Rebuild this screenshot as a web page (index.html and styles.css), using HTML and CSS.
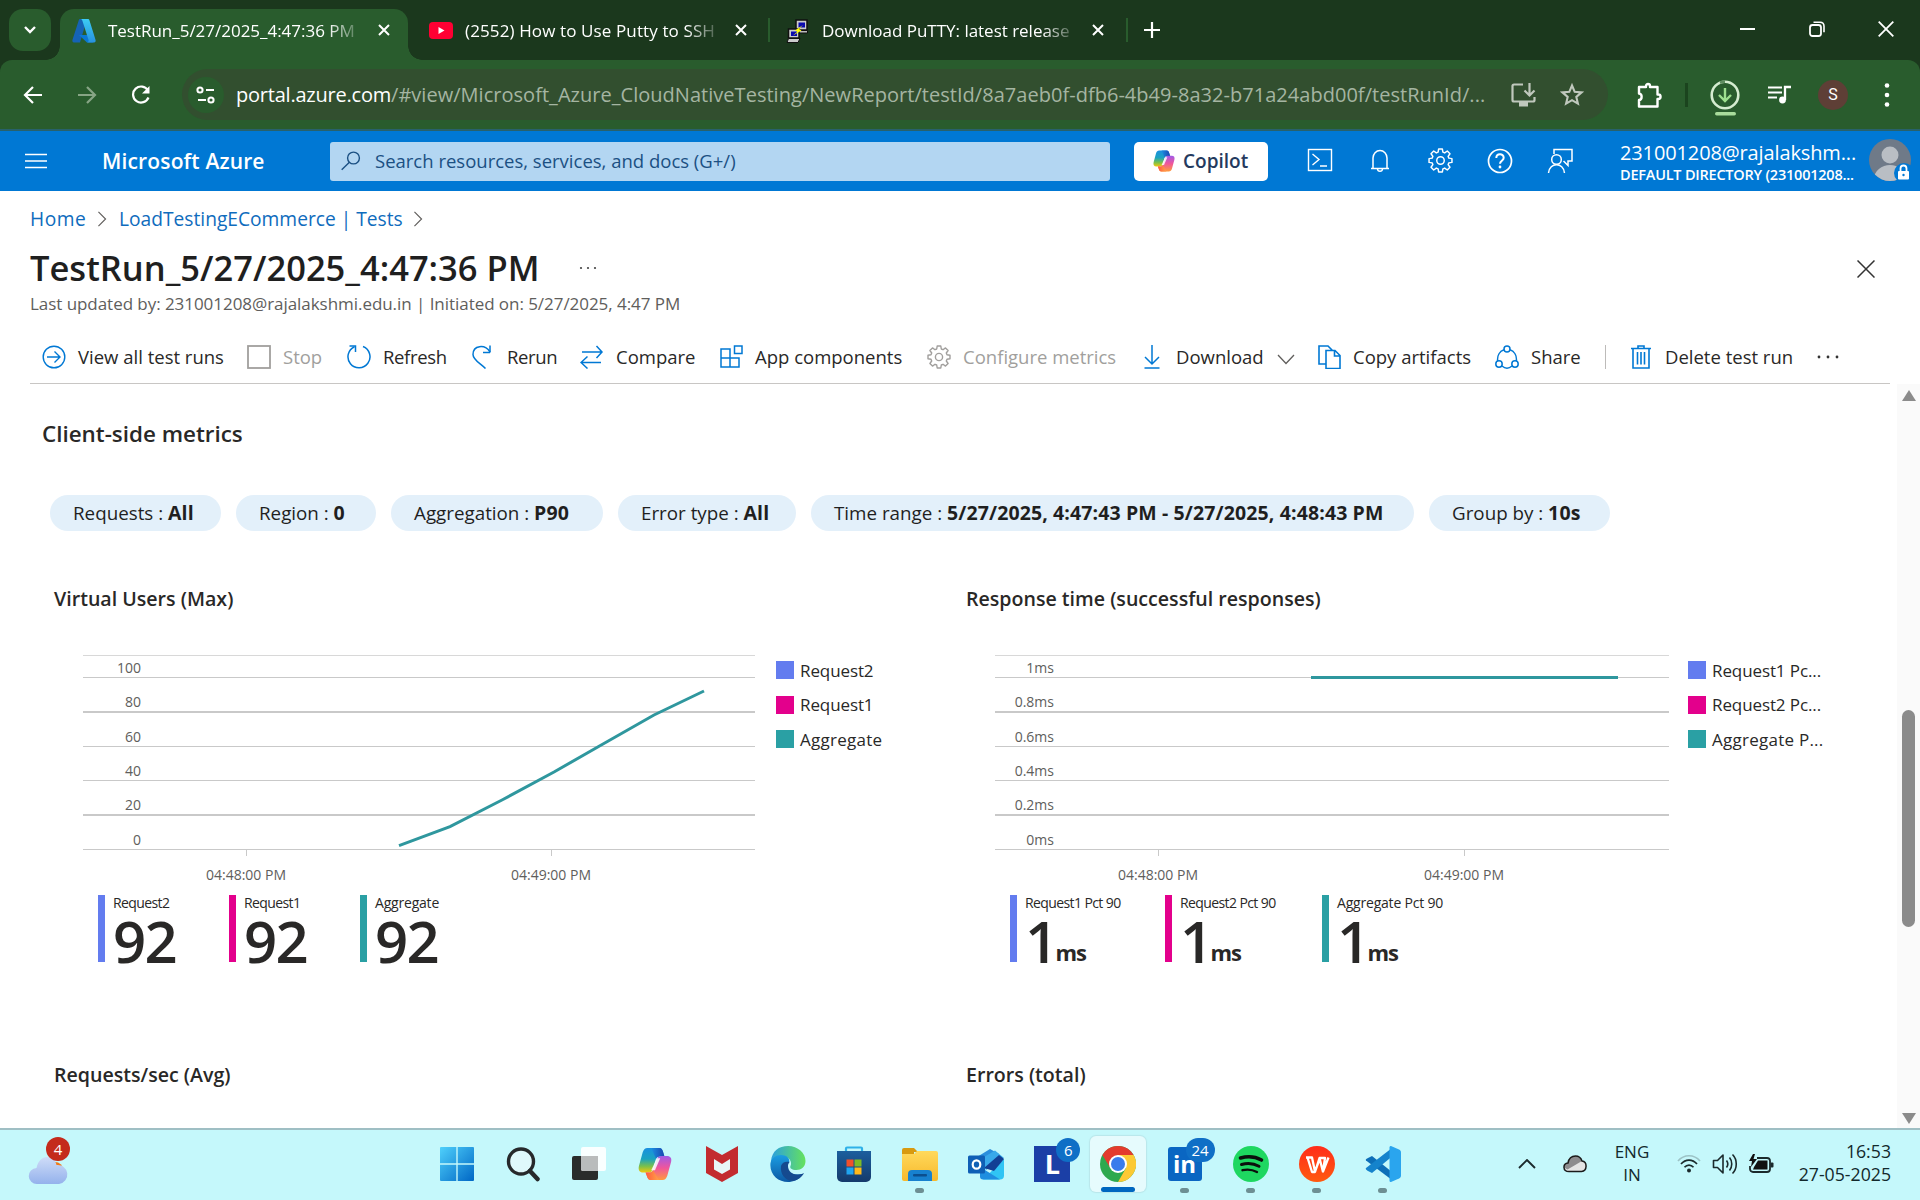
FILE: index.html
```html
<!DOCTYPE html>
<html lang="en">
<head>
<meta charset="utf-8">
<title>TestRun_5/27/2025_4:47:36 PM - Microsoft Azure</title>
<link rel="stylesheet" href="styles.css">
</head>
<body>
<svg class="defs" width="0" height="0" aria-hidden="true">
  <defs>
    <linearGradient id="cpA" x1="0" y1="0" x2="0" y2="1"><stop offset="0" stop-color="#1a8fe0"/><stop offset=".45" stop-color="#1ba3c0"/><stop offset=".75" stop-color="#7cc04a"/><stop offset="1" stop-color="#f3c80c"/></linearGradient>
    <linearGradient id="cpB" x1="0" y1="0" x2="0" y2="1"><stop offset="0" stop-color="#a05ae8"/><stop offset=".5" stop-color="#f0569b"/><stop offset="1" stop-color="#ff9a3c"/></linearGradient>
    <linearGradient id="cpC" x1="0" y1="0" x2="1" y2="0"><stop offset="0" stop-color="#1a8fe0"/><stop offset="1" stop-color="#1b44b0"/></linearGradient>
    <linearGradient id="cpD" x1="0" y1="0" x2="1" y2="0"><stop offset="0" stop-color="#ff5a3c"/><stop offset="1" stop-color="#ffa14a"/></linearGradient>
    <linearGradient id="win" x1="0" y1="0" x2="1" y2="1"><stop offset="0" stop-color="#4fd0fb"/><stop offset="1" stop-color="#0067c5"/></linearGradient>
    <linearGradient id="azR" x1="0" y1="0" x2="0" y2="1"><stop offset="0" stop-color="#3ccbf4"/><stop offset="1" stop-color="#2892df"/></linearGradient>
    <linearGradient id="edA" x1="0" y1="0" x2="1" y2="0"><stop offset="0" stop-color="#2a9fe0"/><stop offset="1" stop-color="#66e25c"/></linearGradient>
    <linearGradient id="edB" x1="0" y1="0" x2="0" y2="1"><stop offset="0" stop-color="#1b9de2"/><stop offset="1" stop-color="#0c59a4"/></linearGradient>
    <linearGradient id="cloud" x1="0" y1="0" x2="0" y2="1"><stop offset="0" stop-color="#cfdcf8"/><stop offset="1" stop-color="#94b2ec"/></linearGradient>
    <linearGradient id="folder" x1="0" y1="0" x2="0" y2="1"><stop offset="0" stop-color="#ffd95c"/><stop offset="1" stop-color="#f7b92c"/></linearGradient>
    <linearGradient id="store" x1="0" y1="0" x2="0" y2="1"><stop offset="0" stop-color="#1c5f9e"/><stop offset="1" stop-color="#143a6b"/></linearGradient>
    <linearGradient id="wps" x1="0" y1="0" x2="0" y2="1"><stop offset="0" stop-color="#ff2d1a"/><stop offset="1" stop-color="#ff5a10"/></linearGradient>
    <symbol id="copilot" viewBox="0 0 36 36">
      <path d="M10 1h12.500c2.400 0 3.300 1.600 4 4l1.500 5h-5c-2.500 0-3.500 1-4.300 3.500L16 23c-1 3-2.300 4-5 4H5.500C1.500 27 0 24 1 20L5 5.500C6 2.500 7.500 1 10 1z" fill="url(#cpA)"/>
      <path d="M14 1h8.500c2.400 0 3.300 1.600 4 4l1.500 5h-5c-2 0-3 .8-3.900 2.500z" fill="url(#cpC)"/>
      <path d="M26 35H13.500c-2.400 0-3.300-1.600-4-4L8 27h4c2.500 0 3.500-1 4.300-3.500L20 13c1-2.500 2.300-3.500 5-3.500h5.500C34.500 9.500 36 12 35 16l-4 14.500c-1 3-2.500 4.500-5 4.500z" fill="url(#cpB)"/>
      <path d="M22 35h-8.500c-2.400 0-3.300-1.600-4-4L8 27h4c2 0 3-.8 3.900-2.500z" fill="url(#cpD)"/>
      <path d="M20 12h3.500L18 24.500h-4z" fill="#fff" fill-opacity=".85"/>
    </symbol>
    <symbol id="gear" viewBox="0 0 24 24"><g fill="none" stroke="currentColor" stroke-width="1.400" stroke-linejoin="round"><path d="M10.200 1h3.600l.5 3 1.700.7 2.500-1.800 2.600 2.600-1.800 2.500.7 1.700 3 .5v3.600l-3 .5-.7 1.700 1.800 2.500-2.600 2.600-2.500-1.800-1.700.7-.5 3h-3.600l-.5-3-1.700-.7-2.500 1.800-2.600-2.600 1.800-2.500-.7-1.700-3-.5v-3.600l3-.5.7-1.700-1.800-2.500 2.600-2.600 2.500 1.800 1.700-.7z"/><circle cx="12" cy="12" r="3.600"/></g></symbol>
    <symbol id="x" viewBox="0 0 12 12"><path d="M1 1l10 10M11 1L1 11" fill="none" stroke="currentColor" stroke-width="2"/></symbol>
    <symbol id="chev" viewBox="0 0 10 18"><path d="M1 1l8 8-8 8" fill="none" stroke="#605e5c" stroke-width="1.300"/></symbol>
  </defs>
</svg>

<div class="screen">
  <div class="tabstrip">
    <div class="tabsearch"><svg width="12" height="8" viewBox="0 0 12 8"><path d="M1 1l5 5 5-5" fill="none" stroke="#fff" stroke-width="2.400"/></svg></div>
    <div class="tab active">
      <svg class="fav" width="24" height="24" viewBox="0 0 24 24"><path d="M8 0h7L8 23.500H2C.5 23.500 0 22 .5 20.800L6.700 1.500C7 .5 7.300 0 8 0z" fill="#1563b5"/><path d="M7 16h11l3 7.500h-6z" fill="#0a78d4"/><path d="M8.500 0H16c.8 0 1.200.5 1.500 1.500l6 19.300c.5 1.500-.2 2.700-1.500 2.700h-7c1.500-.3 1.800-1.500 1.500-2.700L10.300 1.500C10 .6 9.500 0 8.500 0z" fill="url(#azR)"/></svg>
      <span class="tab-title">TestRun_5/27/2025_4:47:36 PM</span>
      <svg class="tab-x" width="12" height="12"><use href="#x"/></svg>
    </div>
    <div class="tab second">
      <svg class="fav" width="24" height="18" viewBox="0 0 24 18"><rect width="24" height="17" rx="4" fill="#ff0033"/><path d="M9.500 5v7l6-3.500z" fill="#fff"/></svg>
      <span class="tab-title">(2552) How to Use Putty to SSH</span>
      <svg class="tab-x" width="12" height="12"><use href="#x"/></svg>
    </div>
    <div class="tab third">
      <svg class="fav" width="24" height="24" viewBox="0 0 24 24"><rect x="10" y="1" width="11" height="10" fill="#ccc" stroke="#111" stroke-width="1.500"/><rect x="12.500" y="3.500" width="6.500" height="5" fill="#0a0ab0"/><path d="M9 11.500h12.500v2.500H12z" fill="#bbb" stroke="#111"/><rect x="2.500" y="10" width="10.500" height="9" fill="#ccc" stroke="#111" stroke-width="1.500"/><rect x="5" y="12.500" width="6" height="4.500" fill="#0a0ab0"/><path d="M2.500 19.500h11.500l-2 4H1z" fill="#ccc" stroke="#111"/><path d="M17 6l-8 5.500 2.500 1-4.500 4 8.500-5-2.500-1.500z" fill="#ff0"/></svg>
      <span class="tab-title">Download PuTTY: latest release</span>
      <svg class="tab-x" width="12" height="12"><use href="#x"/></svg>
    </div>
    <svg class="newtab" width="16" height="16" viewBox="0 0 16 16"><path d="M8 0v16M0 8h16" stroke="#fff" stroke-width="2.200"/></svg>
    <div class="winctl">
      <svg width="16" height="18" viewBox="0 0 16 18"><path d="M0 9h15" stroke="#fff" stroke-width="2"/></svg>
      <svg width="16" height="16" viewBox="0 0 16 16"><rect x="1" y="4" width="11" height="11" rx="2.500" fill="none" stroke="#fff" stroke-width="1.800"/><path d="M4.500 1.200h6.500c2.500 0 4 1.500 4 4v6" fill="none" stroke="#fff" stroke-width="1.600"/></svg>
      <svg width="16" height="16" viewBox="0 0 16 16"><path d="M.7.7l14.600 14.600M15.300.7L.7 15.300" stroke="#fff" stroke-width="1.800"/></svg>
    </div>
  </div>

  <div class="navbar">
    <svg class="nav-back" width="20" height="18" viewBox="0 0 20 18"><path d="M19 9H2M10 1L2 9l8 8" fill="none" stroke="#fff" stroke-width="2.200"/></svg>
    <svg class="nav-fwd" width="20" height="18" viewBox="0 0 20 18"><path d="M1 9h17M10 1l8 8-8 8" fill="none" stroke="#87a585" stroke-width="2.200"/></svg>
    <svg class="nav-reload" width="20" height="20" viewBox="0 0 20 20"><path d="M17.500 12.500A8 8 0 1 1 17 5.500" fill="none" stroke="#fff" stroke-width="2.200"/><path d="M18.500 1v7.500H11z" fill="#fff"/></svg>
    <div class="omnibox">
      <div class="siteinfo"><svg width="20" height="18" viewBox="0 0 20 18"><g fill="none" stroke="#fff" stroke-width="2"><circle cx="4" cy="4" r="2.600"/><path d="M10 4h8M2 14h8"/><circle cx="15" cy="14" r="2.600"/></g></svg></div>
      <div class="url"><span class="host">portal.azure.com</span><span class="path">/#view/Microsoft_Azure_CloudNativeTesting/NewReport/testId/8a7aeb0f-dfb6-4b49-8a32-b71a24abd00f/testRunId/...</span></div>
      <svg class="install" width="25" height="26" viewBox="0 0 25 26"><g fill="none" stroke="#c0c8bd" stroke-width="2.200"><path d="M12 2.500H3a1.500 1.500 0 0 0-1.500 1.500v14A1.500 1.500 0 0 0 3 19.500h19a1.500 1.500 0 0 0 1.500-1.500v-3"/><path d="M18.500 1v12M13.500 8.500l5 5 5-5"/></g><rect x="8" y="20" width="9" height="4.500" fill="#c0c8bd"/></svg>
      <svg width="24" height="25" viewBox="0 0 24 23"><path d="M12 2.500l2.700 6.300 6.800.6-5.200 4.500 1.600 6.700-5.900-3.500-5.900 3.500 1.600-6.700-5.200-4.500 6.800-.6z" fill="none" stroke="#c0c8bd" stroke-width="2.100"/></svg>
    </div>
    <svg class="puzzle" width="26" height="26" viewBox="0 0 26 26"><path d="M3 5h7V4a2 2 0 0 1 4 0v1h7.500v7.500h.8a2.200 2.200 0 0 1 0 4.500h-.8v7.500H3v-6.500c3.500 0 3.500-6.500 0-6.500z" fill="none" stroke="#fff" stroke-width="2.400" stroke-linejoin="round"/></svg>
    <i class="nav-sep"></i>
    <svg class="dl" width="30" height="36" viewBox="0 0 30 36"><circle cx="15" cy="15" r="13.300" fill="none" stroke="#d5ecd0" stroke-width="2.600"/><path d="M15 1.700A13.300 13.300 0 0 0 10 2.700" stroke="#5f8d60" stroke-width="2.700" fill="none"/><path d="M15 8v12M9 15l6 6 6-6" fill="none" stroke="#9ee08f" stroke-width="2.400"/><rect x="5" y="32" width="21" height="3.500" rx="1.700" fill="#a9dc9c"/></svg>
    <svg class="media" width="23" height="20" viewBox="0 0 23 20"><path d="M0 2.500h14M0 7.500h14M0 12.500h9" stroke="#fff" stroke-width="2.200"/><circle cx="14.500" cy="15" r="3.400" fill="#fff"/><path d="M17 15V2h6" fill="none" stroke="#fff" stroke-width="2.300"/></svg>
    <div class="profile">S</div>
    <svg class="kebab" width="6" height="24" viewBox="0 0 6 24"><g fill="#fff"><circle cx="3" cy="2.500" r="2.300"/><circle cx="3" cy="12" r="2.300"/><circle cx="3" cy="21.500" r="2.300"/></g></svg>
  </div>

  <header class="azure">
    <svg class="burger" width="22" height="16" viewBox="0 0 22 16"><path d="M0 1.500h22M0 8h22M0 14.500h22" stroke="#fff" stroke-width="1.500"/></svg>
    <b class="brand">Microsoft Azure</b>
    <div class="search">
      <svg width="20" height="20" viewBox="0 0 20 20"><g fill="none" stroke="#1b5083" stroke-width="1.400"><circle cx="12.500" cy="7" r="5.900"/><path d="M8.400 11.200L.7 18.800"/></g></svg>
      <span>Search resources, services, and docs (G+/)</span>
    </div>
    <div class="copilot-btn"><svg width="24" height="22"><use href="#copilot"/></svg><span>Copilot</span></div>
    <div class="az-icons">
      <svg width="26" height="24" viewBox="0 0 26 24"><g fill="none" stroke="#fff" stroke-width="1.400"><rect x="1.500" y="1.500" width="23" height="21"/><path d="M5.500 6l6.500 5.500L5.500 17M13 18h7"/></g></svg>
      <svg width="24" height="26" viewBox="0 0 24 26"><g fill="none" stroke="#fff" stroke-width="1.500"><path d="M3 20.500h18M5 20.500V10a7 7.500 0 0 1 14 0v10.500"/><path d="M9.500 21c.3 3 4.700 3 5 0"/></g></svg>
      <svg class="white" width="25" height="25"><use href="#gear"/></svg>
      <svg width="26" height="26" viewBox="0 0 26 26"><circle cx="13" cy="13" r="11.500" fill="none" stroke="#fff" stroke-width="1.700"/><path d="M9.300 10c0-5 7.400-4.800 7.400-.3 0 3-3.700 3-3.700 6" fill="none" stroke="#fff" stroke-width="2"/><circle cx="13" cy="19" r="1.400" fill="#fff"/></svg>
      <svg width="26" height="26" viewBox="0 0 26 26"><g fill="none" stroke="#fff" stroke-width="1.500"><path d="M7 6V1.500h18V13h-4v4.500L16.500 13"/><circle cx="9.500" cy="11.500" r="4.800"/><path d="M1.500 25c1-11 15-11 16 0"/></g></svg>
    </div>
    <div class="account"><span class="mail">231001208@rajalakshm...</span><span class="dir">DEFAULT DIRECTORY (231001208...</span></div>
    <svg class="avatar" width="42" height="44" viewBox="0 0 42 44"><defs><clipPath id="av"><circle cx="21" cy="21" r="21"/></clipPath></defs><g clip-path="url(#av)"><rect width="42" height="44" fill="#6f7a88"/><circle cx="21" cy="16" r="8.500" fill="#b9bec4"/><path d="M4 44c0-24 34-24 34 0z" fill="#b9bec4"/></g><circle cx="35" cy="34" r="10" fill="#0078d4"/><rect x="29" y="32" width="11" height="8.500" rx="1" fill="#fff"/><path d="M31.500 32v-2.500a3 3 0 0 1 6 0V32" fill="none" stroke="#fff" stroke-width="1.800"/><circle cx="34.500" cy="36" r="1.200" fill="#0078d4"/></svg>
  </header>

  <main class="blade">
    <div class="crumbs"><a>Home</a><svg width="10" height="16"><use href="#chev"/></svg><a>LoadTestingECommerce | Tests</a><svg width="10" height="16"><use href="#chev"/></svg></div>
    <div class="title"><h1>TestRun_5/27/2025_4:47:36 PM</h1><svg class="dots" width="18" height="4" viewBox="0 0 18 4"><g fill="#444"><circle cx="2" cy="2" r="1.100"/><circle cx="9" cy="2" r="1.100"/><circle cx="16" cy="2" r="1.100"/></g></svg><svg class="close" width="18" height="18" viewBox="0 0 18 18"><path d="M.5.5l17 17M17.500.5l-17 17" stroke="#333" stroke-width="1.500"/></svg></div>
    <p class="subtitle">Last updated by: 231001208@rajalakshmi.edu.in | Initiated on: 5/27/2025, 4:47 PM</p>

    <div class="commands">
      <div><svg width="24" height="24" viewBox="0 0 24 24"><g fill="none" stroke="#0078d4" stroke-width="1.400"><circle cx="12" cy="12" r="10.800"/><path d="M5 12h13M12.500 6.500L18 12l-5.500 5.500"/></g></svg><span>View all test runs</span></div>
      <div class="off"><svg width="24" height="24" viewBox="0 0 24 24"><rect x="1" y="1" width="22" height="22" fill="none" stroke="#a19f9d" stroke-width="1.800"/></svg><span>Stop</span></div>
      <div><svg width="24" height="24" viewBox="0 0 24 24"><g fill="none" stroke="#0078d4" stroke-width="1.500"><path d="M16 1.500a11 11 0 1 1-8.500.2"/><path d="M2.500 1h6v6"/></g></svg><span class="tight">Refresh</span></div>
      <div><svg width="24" height="24" viewBox="0 0 24 24"><g fill="none" stroke="#0078d4" stroke-width="1.500"><path d="M19 7.500h-7M19 7.500V0.500"/><path d="M19 7C14-1 2 0 2 9.500 2 15 9 18 14.500 23.500"/></g></svg><span class="tight">Rerun</span></div>
      <div><svg width="24" height="24" viewBox="0 0 24 24"><path d="M2 7h20M16.500 1L22 7l-5.500 6M21 17.500H1M7.500 11.500L1 17.500l6.500 6" fill="none" stroke="#0078d4" stroke-width="1.500"/></svg><span>Compare</span></div>
      <div><svg width="24" height="24" viewBox="0 0 24 24"><path d="M2 4h9v9H2zM2 13h9v9H2zM11 13h9v9h-9zM15.500 1h7.500v7.500h-7.500z" fill="none" stroke="#0078d4" stroke-width="1.500"/></svg><span>App components</span></div>
      <div class="off"><svg width="24" height="24"><use href="#gear"/></svg><span>Configure metrics</span></div>
      <div><svg width="24" height="24" viewBox="0 0 24 24"><path d="M12 0v18.500M5 12l7 7 7-7M4.500 23h15" fill="none" stroke="#0078d4" stroke-width="1.500"/></svg><span>Download</span><svg class="caret" width="18" height="11" viewBox="0 0 18 11"><path d="M1 1l8 8.500L17 1" fill="none" stroke="#605e5c" stroke-width="1.300"/></svg></div>
      <div><svg width="24" height="24" viewBox="0 0 24 24"><path d="M9 19H2V1h9l4.500 4.500M9 5.500h9l5 5V23.500H9zM17.500 5.500V11H23" fill="none" stroke="#0078d4" stroke-width="1.600"/></svg><span>Copy artifacts</span></div>
      <div><svg width="24" height="24" viewBox="0 0 24 24"><g fill="none" stroke="#0078d4" stroke-width="1.500"><circle cx="12" cy="4" r="3"/><circle cx="4" cy="19" r="3.200"/><circle cx="20" cy="19" r="3.200"/><path d="M9 4.800C4.500 6.500 2 11 2.700 16M15 4.800c4.500 1.700 7 6.200 6.300 11.200M7 21c3 2.600 7 2.600 10 0"/></g></svg><span>Share</span></div>
      <i class="cmd-sep"></i>
      <div><svg width="24" height="24" viewBox="0 0 24 24"><path d="M2 3.500h20M4 3.500V23h16V3.500M9 3.500V1h6v2.500M8.500 7v12.500M12 7v12.500M15.500 7v12.500" fill="none" stroke="#0078d4" stroke-width="1.600"/></svg><span>Delete test run</span></div>
      <svg class="more" width="24" height="4" viewBox="0 0 24 4"><g fill="#333"><circle cx="3" cy="2" r="1.400"/><circle cx="12" cy="2" r="1.400"/><circle cx="21" cy="2" r="1.400"/></g></svg>
    </div>

    <div class="body">
      <div class="content">
        <h2>Client-side metrics</h2>
        <div class="pills">
          <span>Requests : <b>All</b></span><span>Region : <b>0</b></span><span>Aggregation : <b>P90</b></span><span>Error type : <b>All</b></span><span>Time range : <b>5/27/2025, 4:47:43 PM - 5/27/2025, 4:48:43 PM</b></span><span>Group by : <b>10s</b></span>
        </div>
        <div class="charts">
          <section>
            <h3>Virtual Users (Max)</h3>
            <div class="plot">
              <svg width="700" height="240" viewBox="83 650 700 240">
                <path class="grid top" d="M83 655.500H755"/><path class="grid" d="M83 677.500H755M83 746.500H755M83 780.500H755M83 849.500H755M246.500 849v7M551.500 849v7"/><path class="grid thick" d="M83 712H755M83 815H755"/>
                <g class="ylab"><text x="141" y="673">100</text><text x="141" y="707">80</text><text x="141" y="742">60</text><text x="141" y="776">40</text><text x="141" y="810">20</text><text x="141" y="845">0</text></g>
                <g class="xlab"><text x="246" y="880">04:48:00 PM</text><text x="551" y="880">04:49:00 PM</text></g>
                <path class="line" d="M399 845.700L450 826.700L502 800L554 772L603 744L654 715L704 691"/>
              </svg>
              <ul class="legend"><li class="c1">Request2</li><li class="c2">Request1</li><li class="c3">Aggregate</li></ul>
            </div>
            <div class="stats s-left">
              <div class="c1"><small>Request2</small><strong>92</strong></div>
              <div class="c2"><small>Request1</small><strong>92</strong></div>
              <div class="c3"><small>Aggregate</small><strong>92</strong></div>
            </div>
            <h3 class="next">Requests/sec (Avg)</h3>
          </section>
          <section>
            <h3>Response time (successful responses)</h3>
            <div class="plot">
              <svg width="700" height="240" viewBox="995 650 700 240">
                <path class="grid top" d="M995 655.500H1669"/><path class="grid" d="M995 677.500H1669M995 746.500H1669M995 780.500H1669M995 849.500H1669M1158.500 849v7M1464.500 849v7"/><path class="grid thick" d="M995 712H1669M995 815H1669"/>
                <g class="ylab"><text x="1054" y="673">1ms</text><text x="1054" y="707">0.8ms</text><text x="1054" y="742">0.6ms</text><text x="1054" y="776">0.4ms</text><text x="1054" y="810">0.2ms</text><text x="1054" y="845">0ms</text></g>
                <g class="xlab"><text x="1158" y="880">04:48:00 PM</text><text x="1464" y="880">04:49:00 PM</text></g>
                <path class="line" d="M1311 677.500H1618"/>
              </svg>
              <ul class="legend"><li class="c1">Request1 Pc...</li><li class="c2">Request2 Pc...</li><li class="c3">Aggregate P...</li></ul>
            </div>
            <div class="stats s-right">
              <div class="c1"><small>Request1 Pct 90</small><strong>1<em>ms</em></strong></div>
              <div class="c2"><small>Request2 Pct 90</small><strong>1<em>ms</em></strong></div>
              <div class="c3"><small>Aggregate Pct 90</small><strong>1<em>ms</em></strong></div>
            </div>
            <h3 class="next">Errors (total)</h3>
          </section>
        </div>
      </div>
      <div class="scroll"><i class="up"></i><i class="thumb"></i><i class="down"></i></div>
    </div>
  </main>

  <footer class="taskbar">
    <div class="weather"><svg width="44" height="48" viewBox="0 0 44 48"><circle cx="27" cy="30" r="8" fill="#f27a1a"/><path d="M9 45a8 8 0 0 1-.5-16C10 22 14 18 19 18s8.500 3 9.500 8A9.500 9.500 0 0 1 31 45z" fill="url(#cloud)" transform="translate(0 -1)"/></svg><b class="bubble red">4</b></div>
    <div class="apps">
      <div><svg width="36" height="36" viewBox="0 0 36 36"><path d="M2 1h15.300v16.300H1V2a1 1 0 0 1 1-1zM18.700 1H34a1 1 0 0 1 1 1v15.300H18.700zM1 18.700h16.300V35H2a1 1 0 0 1-1-1zM18.700 18.700H35V34a1 1 0 0 1-1 1H18.700z" fill="url(#win)"/></svg></div>
      <div><svg width="36" height="36" viewBox="0 0 36 36"><circle cx="16" cy="15.500" r="12.500" fill="#dff8fb" stroke="#26292b" stroke-width="3.400"/><path d="M25 25l7.500 8" stroke="#26292b" stroke-width="4.500" stroke-linecap="round"/></svg></div>
      <div><svg width="36" height="36" viewBox="0 0 36 36"><rect x="1" y="10" width="26" height="24" rx="2" fill="#2a2c2b"/><rect x="10" y="1" width="25" height="24" rx="2" fill="#fff" fill-opacity=".9"/><path d="M10 10h17v15H12a2 2 0 0 1-2-2z" fill="#b9bcbc"/></svg></div>
      <div><svg width="36" height="34"><use href="#copilot"/></svg></div>
      <div><svg width="36" height="36" viewBox="0 0 36 36"><path d="M2 0l16 9 16-9v27L18 36 2 27z" fill="#c32b2f"/><path d="M10 13l8 5 8-5v10.500L18 28l-8-4.500z" fill="#e8f6f7"/></svg></div>
      <div><svg width="36" height="36" viewBox="0 0 36 36"><path d="M1 15C2 5 9 0 18 0c10 0 17.500 7 17.500 15 0 6-4.500 9-9 9-5 0-7-2-6-4 2-4-1-9-7-9-6 0-11 3-12.500 8z" fill="url(#edA)"/><path d="M.5 17C1.500 12 6 9 11 9c6 0 9.500 4 8 8-5 1-5 14 14 11-4 6-10 8-15 8C8 36-.8 28 .5 17z" fill="url(#edB)"/><path d="M11 20c-1 8 4 15 12 15 5-1 9-4 11-8-8 4-16 0-16-7 0-2 .7-3 1.500-4C16 15 12 16 11 20z" fill="#154a8f"/></svg></div>
      <div><svg width="36" height="36" viewBox="0 0 36 36"><path d="M10 6V2.500a1 1 0 0 1 1-1h14a1 1 0 0 1 1 1V6" fill="none" stroke="#2fb1e8" stroke-width="2.200"/><path d="M1 5h34v26a5 5 0 0 1-5 5H6a5 5 0 0 1-5-5z" fill="url(#store)"/><path d="M10.500 13.500h7v7h-7z" fill="#f2502a"/><path d="M18.500 13.500h7v7h-7z" fill="#7fba25"/><path d="M10.500 21.500h7v7h-7z" fill="#20a5ef"/><path d="M18.500 21.500h7v7h-7z" fill="#ffb91a"/></svg></div>
      <div class="run"><svg width="36" height="36" viewBox="0 0 36 36"><path d="M0 4a2 2 0 0 1 2-2h10l4 4h-4v4H0z" fill="#d89a10"/><path d="M0 8h12l3-3h19a2 2 0 0 1 2 2v26a2 2 0 0 1-2 2H2a2 2 0 0 1-2-2z" fill="url(#folder)"/><path d="M6 35v-7a4 4 0 0 1 4-4h16a4 4 0 0 1 4 4v7z" fill="#1781cf"/><rect x="11" y="28" width="14" height="2.400" rx="1" fill="#0b4f8f"/></svg></div>
      <div><svg width="36" height="36" viewBox="0 0 36 36"><path d="M9 11L22 3l9 5-12 12z" fill="#2b8fdc"/><path d="M11 14L27 4.500l9 7.500-18 12z" fill="#38a9ea"/><path d="M36 13v16.500a4 4 0 0 1-4 4H15z" fill="#30c4f4"/><path d="M16 22L31 9l5 4-10 12z" fill="#123f94"/><path d="M12 26l5-2 15 9.500H15a3 3 0 0 1-3-3z" fill="#1f8ee0"/><rect y="9.500" width="17" height="18" rx="1.500" fill="#0f5fb5"/><ellipse cx="8.500" cy="18.500" rx="3.800" ry="4.200" fill="none" stroke="#fff" stroke-width="2.200"/></svg></div>
      <div><span class="lens">L</span><b class="bubble blue">6</b></div>
      <div class="front"><svg width="36" height="36" viewBox="0 0 36 36"><circle cx="18" cy="18" r="18" fill="#2da94f"/><path d="M18 18L2.400 9A18 18 0 0 1 33.600 9z" fill="#e33b2e"/><path d="M18 9h15.600A18 18 0 0 1 18 36l8-14z" fill="#fcc934"/><path d="M2.400 9l8.200 13.500L18 9z" fill="#e33b2e"/><circle cx="18" cy="18" r="9" fill="#fff"/><circle cx="18" cy="18" r="7" fill="#3a7cec"/></svg></div>
      <div class="run"><span class="lin">in</span><b class="bubble blue wide">24</b></div>
      <div class="run"><svg width="36" height="36" viewBox="0 0 36 36"><circle cx="18" cy="18" r="18" fill="#1ed760"/><g fill="none" stroke="#0b0f0c" stroke-linecap="round"><path d="M7.500 12c7-2 15-1.300 21 2" stroke-width="3.600"/><path d="M8.500 18.500c6-1.600 12.500-1 17.500 1.800" stroke-width="3"/><path d="M9.500 24.200c5-1.200 10-.6 14.500 1.800" stroke-width="2.400"/></g></svg></div>
      <div class="run"><svg width="36" height="36" viewBox="0 0 36 36"><circle cx="18" cy="18" r="18" fill="url(#wps)"/><path d="M7 11.500h6l3 14 5-13.500h5l-2 13.500 5.500-14M8.500 11.500l4.500 14.500h3L20.500 12l3.500 14" fill="none" stroke="#fff" stroke-width="2.300" stroke-linejoin="round"/></svg></div>
      <div class="run"><svg width="36" height="36" viewBox="0 0 36 36"><path d="M3 12l4-2 20 16v8L1 14.500c-1-1 1-2 2-2.500z" fill="#0d6fb8"/><path d="M3 25l4 2L27 10.500V2L1 22c-1 1 1 2.500 2 3z" fill="#1583cc"/><path d="M26 0l8 3.500c1.300.6 2 1.500 2 3v23c0 1.500-.7 2.400-2 3L26 36c-1 .2-1.500-.5-1.500-1.500v-33C24.500.5 25 0 26 0z" fill="#2aa5ee"/></svg></div>
    </div>
    <div class="tray">
      <svg width="18" height="10" viewBox="0 0 18 10"><path d="M1 9l8-8 8 8" fill="none" stroke="#1b2a2c" stroke-width="1.900"/></svg>
      <svg width="24" height="18" viewBox="0 0 24 18"><path d="M6 16.500C-.5 16.500-.5 8.500 5 8 6 2.500 9.500 1 12.500 1c3.500 0 5.500 2 6.500 5 5.500.5 5.500 10-.5 10.500z" fill="#e4e4e4"/><path d="M1 12.500c0-3 1.500-4.300 4-4.500C6 2.500 9.500 1 12.500 1c3.500 0 5.500 2 6.500 5L4.500 14.500z" fill="#8d8c8e"/><path d="M6 16.500C-.5 16.500-.5 8.500 5 8 6 2.500 9.500 1 12.500 1c3.500 0 5.500 2 6.500 5 5.500.5 5.500 10-.5 10.500z" fill="none" stroke="#1b1b1b" stroke-width="1.500"/></svg>
      <div class="lang"><span>ENG</span><span>IN</span></div>
      <svg width="24" height="20" viewBox="0 0 24 20"><path d="M1 7C7 0 17 0 23 7" fill="none" stroke="#9cc3c6" stroke-width="1.700"/><g fill="none" stroke="#1b2a2c" stroke-width="1.700"><path d="M4 10c4.500-5.300 11.500-5.300 16 0M7.500 13.300c2.500-3 6.500-3 9 0"/></g><circle cx="12" cy="16.500" r="2" fill="#1b2a2c"/></svg>
      <svg width="26" height="22" viewBox="0 0 26 22"><path d="M1.500 7.500h4L11 2v18l-5.500-5.500h-4zM14.500 7.500c1.500 2 1.500 5 0 7M17.500 4.500c3 3.500 3 9.500 0 13M20.500 1.500c5 5 5 14 0 19" fill="none" stroke="#1b2a2c" stroke-width="1.600" stroke-linejoin="round"/></svg>
      <svg width="26" height="22" viewBox="0 0 26 22"><path d="M9 5h10a3 3 0 0 1 3 3v8a3 3 0 0 1-3 3H5a3 3 0 0 1-3-3v-3" fill="none" stroke="#1b2a2c" stroke-width="1.800"/><path d="M10 7.500h9.500v9H5l1-2.500z" fill="#111"/><rect x="22.500" y="9.500" width="3" height="5" rx="1" fill="#1b2a2c"/><path d="M5 1L1 8h3l-1 6 6-8H5.500L7 1z" fill="#111"/></svg>
      <div class="clock"><span>16:53</span><span>27-05-2025</span></div>
    </div>
  </footer>
</div>
</body>
</html>
```
FILE: styles.css
```css
* { box-sizing: border-box; margin: 0; padding: 0; }
body { width: 1920px; height: 1200px; overflow: hidden; background: #fff; color: #292827; font-family: "Open Sans", "Noto Sans", sans-serif; font-size: 18.500px; white-space: nowrap; }
svg { display: block; flex: none; }
.defs { position: absolute; }
.screen { display: flex; flex-direction: column; width: 1920px; height: 1200px; background: #1b381d; }

/* Browser tab strip */
.tabstrip { height: 60px; display: flex; align-items: flex-start; color: #fff; font-size: 17px; }
.tabsearch { width: 42px; height: 42px; margin: 9px 9px 0; border-radius: 14px; background: #295c2d; display: flex; align-items: center; justify-content: center; }
.tab { height: 43px; margin-top: 9px; display: flex; align-items: center; position: relative; }
.tab-title { overflow: hidden; margin-left: 12px; letter-spacing: -.02px; -webkit-mask-image: linear-gradient(90deg, #000 88%, transparent 103%); mask-image: linear-gradient(90deg, #000 88%, transparent 103%); }
.tab-x { position: absolute; top: 15px; color: #fff; }
.active { width: 348px; height: 51px; padding: 0 0 8px 12px; background: #295c2d; border-radius: 14px 14px 0 0; }
.active::before, .active::after { content: ""; position: absolute; bottom: 0; width: 14px; height: 14px; }
.active::before { left: -14px; background: radial-gradient(circle at 0 0, transparent 13.500px, #295c2d 14px); }
.active::after { right: -14px; background: radial-gradient(circle at 100% 0, transparent 13.500px, #295c2d 14px); }
.active .tab-title { width: 249px; }
.active .tab-x { left: 318px; }
.second { width: 362px; padding-left: 21px; }
.second .tab-title { width: 251px; letter-spacing: .12px; }
.second .tab-x { left: 327px; }
.third { width: 358px; padding-left: 16px; }
.third .tab-title { width: 250px; }
.third .tab-x { left: 322px; }
.second::after, .third::after { content: ""; position: absolute; right: 0; top: 9px; width: 2px; height: 24px; background: #295c2d; }
.newtab { margin: 22px 0 0 16px; }
.winctl { display: flex; align-items: center; gap: 53px; margin: 20px 26px 0 auto; }

/* Address bar row */
.navbar { height: 71px; background: #295c2d; border-bottom: 2px solid #28616b; border-radius: 12px 12px 0 0; display: flex; align-items: center; padding-left: 23px; }
.nav-fwd { margin-left: 34px; }
.nav-reload { margin-left: 34px; }
.omnibox { width: 1426px; height: 51px; margin-left: 31px; border-radius: 26px; background: #324f2f; display: flex; align-items: center; padding-left: 6px; }
.siteinfo { width: 36px; height: 36px; border-radius: 50%; background: #295c2d; display: flex; align-items: center; justify-content: center; }
.url { width: 1250px; margin-left: 12px; font-size: 20px; overflow: hidden; }
.host { color: #fff; letter-spacing: -.22px; }
.path { color: #a5b5a2; letter-spacing: .03px; }
.install { margin: 0 24px 0 25px; }
.puzzle { margin-left: 28px; }
.nav-sep { width: 3px; height: 24px; margin-left: 23px; background: #1b441e; }
.dl { margin: 6px 0 0 22px; }
.media { margin-left: 28px; }
.profile { width: 30px; height: 30px; margin-left: 27px; border-radius: 50%; background: #5e3f36; color: #fff; font: 16px/30px Roboto, sans-serif; text-align: center; }
.kebab { margin-left: 36px; }

/* Azure header */
.azure { height: 60px; background: #0078d4; color: #fff; display: flex; align-items: center; }
.burger { margin-left: 25px; }
.brand { width: 162px; margin-left: 55px; font-size: 21px; font-weight: 600; letter-spacing: .15px; }
.search { width: 780px; height: 39px; margin-left: 66px; border-radius: 3px; background: #b3d6f2; color: #1b5083; display: flex; align-items: center; padding-left: 11px; gap: 14px; }
.search span { margin-top: -1px; }
.copilot-btn { width: 134px; height: 39px; margin-left: 24px; border-radius: 5px; background: #fff; color: #243a5e; font-size: 19px; font-weight: 600; display: flex; align-items: center; padding-left: 18px; gap: 7px; }
.copilot-btn span { margin-top: -1px; }
.white { color: #fff; }
.az-icons { display: grid; grid-template-columns: repeat(5, 60px); justify-items: center; margin-left: 22px; width: 300px; }
.account { display: flex; flex-direction: column; width: 240px; margin: 3px 0 0 30px; }
.mail { font-size: 20px; line-height: 24px; letter-spacing: -.13px; }
.dir { font-size: 14.500px; line-height: 20px; font-weight: 600; letter-spacing: -.22px; }
.avatar { margin-left: 9px; }

/* Blade heading */
.blade { flex: 1; min-height: 0; display: flex; flex-direction: column; background: #fff; }
.crumbs { height: 55px; padding: 0 0 1px 30px; display: flex; align-items: center; color: #0f6cbd; font-size: 19.200px; }
.crumbs a:first-child { width: 56px; letter-spacing: .5px; }
.crumbs svg { margin: 2px 12px 0 11px; }
.crumbs a + svg + a { width: 283px; }
.title { height: 44px; padding-left: 30px; display: flex; align-items: center; }
h1 { width: 509px; margin-top: -2px; font-size: 34.500px; font-weight: 600; color: #1f1f1f; }
.title .dots { margin-left: 40px; }
.title .close { margin: 2px 45px 0 auto; }
.subtitle { height: 28px; padding-left: 30px; line-height: 28px; font-size: 17px; letter-spacing: -.05px; color: #605e5c; }
.commands { height: 66px; margin: 0 30px; padding: 13px 0 0 12px; border-bottom: 1px solid #c8c6c4; display: grid; grid-template-columns: 205px 100px 124px 109px 139px 208px 213px 177px 178px 110px 24px 187px 1fr; align-items: center; flex: none; }
.commands > div { display: flex; align-items: center; gap: 12px; }
.commands span { margin-top: -1px; }
.commands .off { color: #a19f9d; }
.commands .tight { letter-spacing: -.35px; }
.caret { margin: 4px 0 0 1px; }
.cmd-sep { width: 1px; height: 24px; background: #bdbbb9; }

/* Scrolling body */
.body { flex: 1; min-height: 0; display: flex; }
.content { flex: 1; min-width: 0; overflow: hidden; padding-top: 33px; }
h2 { height: 34px; line-height: 34px; padding-left: 42px; font-size: 22.400px; font-weight: 600; }
.pills { display: grid; grid-template-columns: 171px 140px 212px 178px 603px 181px; gap: 15px; margin: 44px 0 0 50px; }
.pills > span { height: 36px; line-height: 36px; border-radius: 18px; padding-left: 23px; background: #e3f0fa; color: #1f1f1f; font-size: 18.800px; }
.pills b { font-weight: 700; font-size: 19.500px; line-height: 1; letter-spacing: .12px; }
.charts { display: grid; grid-template-columns: 912px 900px; margin: 52px 0 0 54px; }
h3 { height: 32px; line-height: 31px; font-size: 19.600px; font-weight: 600; }
.plot { display: flex; margin: 35px 0 0 29px; height: 240px; }
.plot svg { margin-right: -7px; }
.grid { stroke: #c9c9c9; stroke-width: 1; fill: none; }
.top { stroke: #d8d8d8; }
.thick { stroke-width: 2; }
.line { stroke: #2f979e; stroke-width: 3; fill: none; }
.ylab, .xlab { font-size: 14px; fill: #605e5c; }
.ylab { text-anchor: end; }
.xlab { text-anchor: middle; }
.legend { list-style: none; padding-top: 3px; font-size: 17px; letter-spacing: -.1px; }
.legend li { height: 34.500px; display: flex; align-items: center; gap: 6px; }
.legend .c3 { letter-spacing: .25px; }
.legend li::before { content: ""; width: 18px; height: 18px; background: var(--c); }
.c1 { --c: #637cef; }
.c2 { --c: #e3008c; }
.c3 { --c: #2aa0a4; }
.stats { display: grid; height: 67px; margin: 5px 0 0 44px; }
.s-left { grid-template-columns: 131px 131px 131px; }
.s-right { grid-template-columns: 155px 157px 160px; }
.stats > div { height: 67px; border-left: 7px solid var(--c); padding-left: 8px; }
.stats small { display: block; height: 17px; line-height: 15px; font-size: 14px; font-weight: 500; letter-spacing: -.6px; }
.stats .c3 small { letter-spacing: -.2px; }
.stats strong { display: block; margin-top: 4px; line-height: 50px; font-size: 58px; font-weight: 600; letter-spacing: -1.700px; }
.stats em { font-style: normal; font-size: 22px; font-weight: 700; line-height: 1; margin-left: -1px; letter-spacing: -1px; vertical-align: 2px; }
.next { margin-top: 97px; }
.scroll { width: 23px; background: #fafafa; display: flex; flex-direction: column; align-items: center; }
.up { border: 7px solid transparent; border-top: 0; border-bottom: 11px solid #8b8b8b; margin-top: 6px; }
.thumb { width: 13px; height: 217px; border-radius: 7px; background: #8b8b8b; margin-top: 309px; }
.down { border: 7px solid transparent; border-bottom: 0; border-top: 11px solid #8b8b8b; margin: auto 0 4px; }

/* Windows taskbar */
.taskbar { height: 72px; background: #c5f8fb; border-top: 2px solid #9fbfc4; padding-bottom: 2px; display: flex; align-items: center; color: #12292c; font-size: 17px; }
.weather { width: 44px; margin-left: 28px; height: 62px; position: relative; }
.weather svg { margin-top: 7px; }
.bubble { position: absolute; width: 24px; height: 24px; border-radius: 12px; color: #fff; font-size: 15px; font-weight: 400; line-height: 24px; text-align: center; }
.red { left: 18px; top: 4px; background: #c42b1c; }
.blue { left: 32px; top: 2px; background: #0f6fc6; }
.wide { left: 29px; width: 29px; }
.apps { display: grid; grid-template-columns: repeat(15, 56px); column-gap: 10.150px; margin-left: 357px; }
.apps > div { height: 56px; display: flex; align-items: center; justify-content: center; position: relative; border-radius: 6px; }
.front { background: #e6fbfd; box-shadow: 0 0 1px 1px #b9e6ea; }
.run::after, .front::after { content: ""; position: absolute; bottom: -1px; width: 9px; height: 5px; border-radius: 3px; background: #6d8f93; }
.front::after { bottom: 0; width: 34px; background: #0067c0; }
.lens { width: 36px; height: 36px; background: #1b3fa6; color: #fff; font-weight: 700; font-size: 27px; line-height: 36px; text-align: center; }
.lin { width: 34px; height: 34px; border-radius: 3px; background: #0a66c2; color: #fff; font-weight: 700; font-size: 24px; line-height: 34px; text-align: center; }
.tray { display: grid; grid-template-columns: 45px 49px 65px 35px 36px 26px 1fr; align-items: center; margin-left: 107px; flex: 1; }
.lang, .clock { display: flex; flex-direction: column; line-height: 23px; margin-top: -2px; }
.lang { align-items: center; width: 40px; }
.clock { align-items: flex-end; padding-right: 29px; font-size: 17.700px; }
```
